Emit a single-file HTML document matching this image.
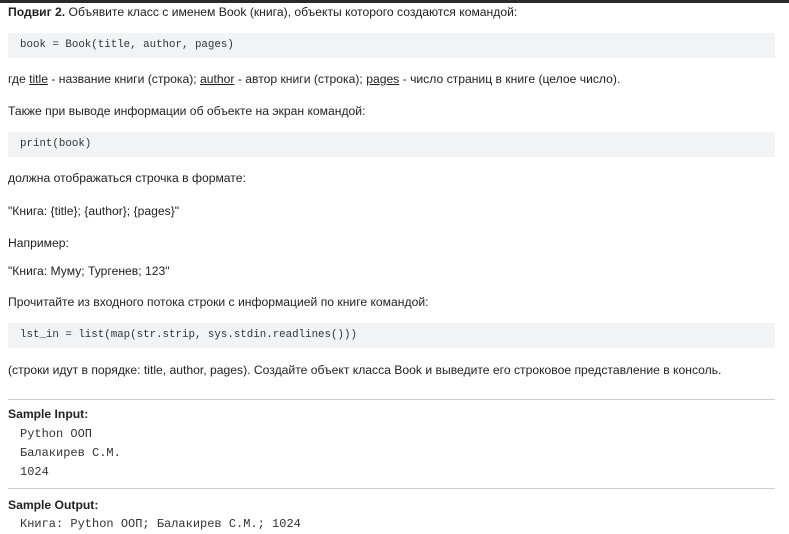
<!DOCTYPE html>
<html><head><meta charset="utf-8"><style>
body{margin:0;width:789px;height:534px;background:#fff;position:relative;overflow:hidden;font-family:"Liberation Sans",sans-serif;font-size:12.15px;color:#222}
.bar{position:absolute;left:0;top:0;width:789px;height:3px;background:#2a2a2a}
.t{position:absolute;left:8px;white-space:nowrap;line-height:14px}
.code{position:absolute;left:8px;width:767px;height:25px;background:#f2f3f5}
.code span{position:absolute;left:12px;top:5px;font-family:"Liberation Mono",monospace;font-size:10.8px;color:#333;line-height:15px}
.hr{position:absolute;left:8px;width:767px;height:1px;background:#d0d0d0}
.m{position:absolute;left:20px;font-family:"Liberation Mono",monospace;font-size:12px;color:#333;line-height:14px;white-space:nowrap}
u{text-decoration:underline}
b{font-weight:bold}
</style></head><body>
<div class="bar"></div>
<div class="t" style="top:5px"><b>Подвиг 2.</b> Объявите класс с именем Book (книга), объекты которого создаются командой:</div>
<div class="code" style="top:33px"><span>book = Book(title, author, pages)</span></div>
<div class="t" style="top:72px">где <u>title</u> - название книги (строка); <u>author</u> - автор книги (строка); <u>pages</u> - число страниц в книге (целое число).</div>
<div class="t" style="top:104px">Также при выводе информации об объекте на экран командой:</div>
<div class="code" style="top:132px"><span>print(book)</span></div>
<div class="t" style="top:171px">должна отображаться строчка в формате:</div>
<div class="t" style="top:204px">"Книга: {title}; {author}; {pages}"</div>
<div class="t" style="top:236px">Например:</div>
<div class="t" style="top:264px">"Книга: Муму; Тургенев; 123"</div>
<div class="t" style="top:295px">Прочитайте из входного потока строки с информацией по книге командой:</div>
<div class="code" style="top:323px"><span>lst_in = list(map(str.strip, sys.stdin.readlines()))</span></div>
<div class="t" style="top:363px">(строки идут в порядке: title, author, pages). Создайте объект класса Book и выведите его строковое представление в консоль.</div>
<div class="hr" style="top:399px"></div>
<div class="t" style="top:407px"><b>Sample Input:</b></div>
<div class="m" style="top:427px">Python ООП</div>
<div class="m" style="top:446px">Балакирев С.М.</div>
<div class="m" style="top:465px">1024</div>
<div class="hr" style="top:488px"></div>
<div class="t" style="top:498px"><b>Sample Output:</b></div>
<div class="m" style="top:517px">Книга: Python ООП; Балакирев С.М.; 1024</div>
</body></html>
